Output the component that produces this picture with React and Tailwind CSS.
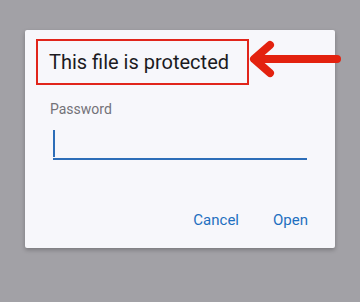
import React from "react";

const Arrow = () => (
	<svg className="absolute left-[249px] top-[39px]" width="92" height="42" viewBox="0 0 92 42">
		<path
			d="M88 20 H7 M21 6 L5 20 L21 34"
			fill="none"
			stroke="#e3220f"
			strokeWidth="8"
			strokeLinecap="round"
			strokeLinejoin="round"
		/>
	</svg>
);

const App = () => {
	return (
		<div className="relative w-[360px] h-[302px] bg-[#a2a1a6] pt-[30px] pl-[25px] font-['Roboto',sans-serif]">
			<div className="w-[310px] h-[218px] bg-[#f7f7fb] rounded-[2px] shadow-[0_2px_4px_rgba(0,0,0,0.25)] flex flex-col">
				{/* Title */}
				<div className="ml-[11px] mt-[9px] w-[213px] h-[46px] border-2 border-[#e1251b] flex items-center pl-[11px]">
					<h2 className="text-[20px] leading-none text-[#1c1b1f]">This file is protected</h2>
				</div>

				{/* Field */}
				<div className="px-[25px] mt-[17px]">
					<label className="block text-[14px] leading-none text-[#737278]">Password</label>
					<div className="mt-[14px] ml-[3px] w-[254px] h-[30px] border-b-2 border-[#2d6db8] flex items-start">
						<span className="w-[2px] h-[27px] bg-[#2d6db8]" />
					</div>
				</div>

				{/* Actions */}
				<div className="mt-auto mb-[20px] flex justify-end gap-[34px] pr-[27px]">
					<button className="text-[15px] leading-none text-[#1e6fc0]">Cancel</button>
					<button className="text-[15px] leading-none text-[#1e6fc0]">Open</button>
				</div>
			</div>
			<Arrow />
		</div>
	);
};

export default App;
